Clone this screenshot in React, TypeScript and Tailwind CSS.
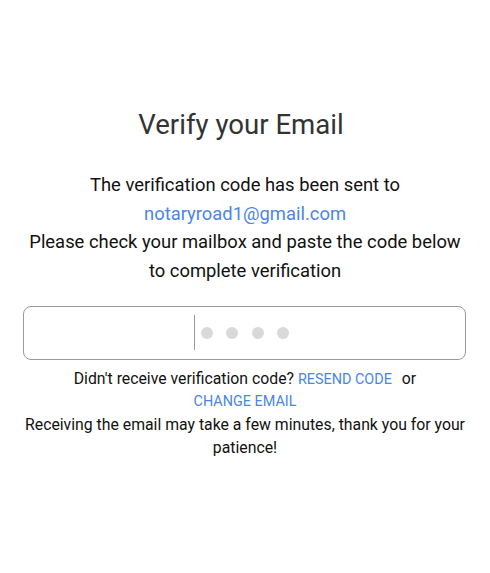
import React from "react";

export default function App() {
  return (
    <div className="min-h-screen bg-white font-['Roboto',sans-serif] text-center text-[#222]">
      <div className="pt-[107px]">
        <h1 className="pr-[8px] text-[27.6px] leading-[36px] text-[#333]">Verify your Email</h1>

        <div className="mt-[28px] text-[18.4px] leading-[28.7px] text-[#111]">
          <p>The verification code has been sent to</p>
          <p className="text-[#4a86e8]">notaryroad1@gmail.com</p>
          <p>Please check your mailbox and paste the code below</p>
          <p>to complete verification</p>
        </div>

        {/* Code input */}
        <div className="mx-[23px] mt-[20px] flex h-[54px] w-[443px] items-center justify-center rounded-[8px] border border-[#9a9a9a] pr-[6px]">
          <div className="h-[35px] w-px bg-[#999]" />
          <div className="ml-[6px] flex gap-[13.5px]">
            <span className="h-[12px] w-[12px] rounded-full bg-[#d9d9d9]" />
            <span className="h-[12px] w-[12px] rounded-full bg-[#d9d9d9]" />
            <span className="h-[12px] w-[12px] rounded-full bg-[#d9d9d9]" />
            <span className="h-[12px] w-[12px] rounded-full bg-[#d9d9d9]" />
          </div>
        </div>

        <div className="mt-[8px] px-[20px] text-[15.8px] leading-[21.5px] text-[#111]">
          <p className="px-[40px]">
            Didn't receive verification code?{" "}
            <button className="text-[14.4px] text-[#4a86e8]">RESEND CODE</button>
            <span className="ml-[10px]">or</span>{" "}
            <button className="text-[14.4px] text-[#4a86e8]">CHANGE EMAIL</button>
          </p>
          <p className="leading-[23.5px]">Receiving the email may take a few minutes, thank you for your patience!</p>
        </div>
      </div>
    </div>
  );
}
